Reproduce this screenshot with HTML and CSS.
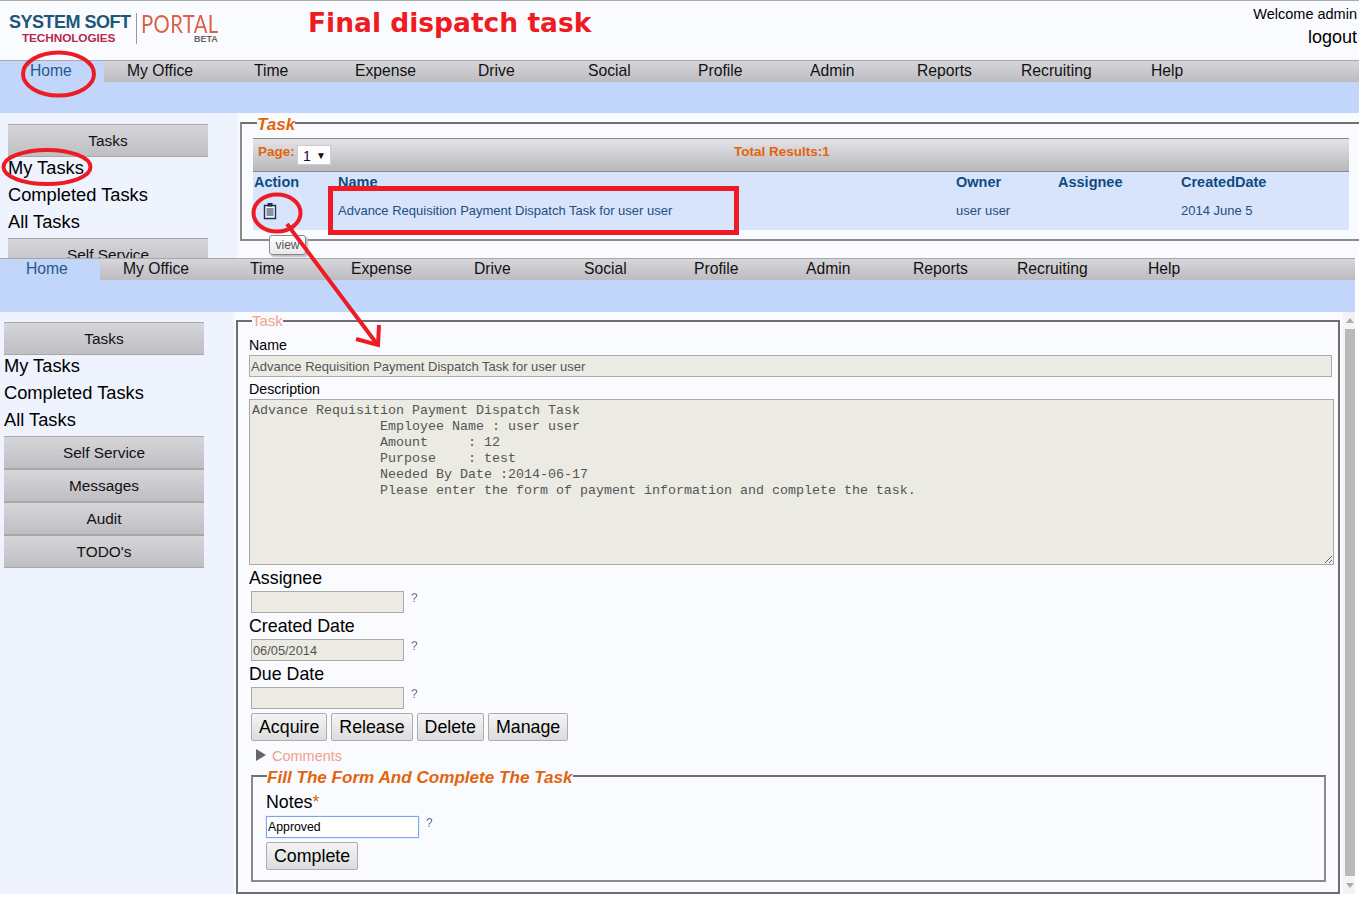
FILE: index.html
```html
<!DOCTYPE html>
<html lang="en">
<head>
<meta charset="utf-8">
<title>Final dispatch task</title>
<link rel="stylesheet" href="styles.css">
</head>
<body>
<div class="page">
  <section class="shot shot-a">
    <header class="topbar">
      <div class="logo">
        <div class="logo-left">
          <span class="logo-sys">SYSTEM SOFT</span>
          <span class="logo-tech">TECHNOLOGIES</span>
        </div>
        <div class="logo-right">
          <span class="logo-portal">PORTAL</span>
          <span class="logo-beta">BETA</span>
        </div>
      </div>
      <h1 class="title">Final dispatch task</h1>
      <div class="user">
        <span class="welcome">Welcome admin</span>
        <span class="logout">logout</span>
      </div>
    </header>
    <nav class="nav">
      <span class="tab tab-home">Home</span><span class="tab">My Office</span><span class="tab">Time</span><span class="tab">Expense</span><span class="tab">Drive</span><span class="tab">Social</span><span class="tab">Profile</span><span class="tab">Admin</span><span class="tab">Reports</span><span class="tab">Recruiting</span><span class="tab">Help</span>
    </nav>
    <div class="band"></div>
    <div class="body">
      <aside class="side">
        <div class="side-head">Tasks</div>
        <div class="side-link">My Tasks</div>
        <div class="side-link">Completed Tasks</div>
        <div class="side-link">All Tasks</div>
        <div class="side-head">Self Service</div>
      </aside>
      <main class="main">
        <fieldset class="box list-box">
          <legend class="legend-strong">Task</legend>
          <div class="pager">
            <span class="pager-label">Page:</span>
            <span class="select">1<i class="select-arrow">▼</i></span>
            <span class="pager-total">Total Results:1</span>
          </div>
          <div class="grid">
            <span class="th">Action</span><span class="th">Name</span><span class="th">Owner</span><span class="th">Assignee</span><span class="th">CreatedDate</span>
            <span class="td">
              <svg class="clip" viewBox="0 0 14 18" width="14" height="18"><path d="M1.5 3.5h11v13h-11z" fill="#f4f7ff" stroke="#1f2f4d" stroke-width="1.4"/><path d="M4.5 1h5v3.5h-5z" fill="#1f2f4d"/><path d="M3.5 7h7M3.5 9h7M3.5 11h7M3.5 13h7" stroke="#1f2f4d" stroke-width="1.1"/></svg>
            </span>
            <span class="td">Advance Requisition Payment Dispatch Task for user user</span><span class="td">user user</span><span class="td"></span><span class="td">2014 June 5</span>
          </div>
        </fieldset>
      </main>
    </div>
    <div class="tip">view</div>
  </section>

  <section class="shot shot-b">
    <nav class="nav">
      <span class="tab tab-home">Home</span><span class="tab">My Office</span><span class="tab">Time</span><span class="tab">Expense</span><span class="tab">Drive</span><span class="tab">Social</span><span class="tab">Profile</span><span class="tab">Admin</span><span class="tab">Reports</span><span class="tab">Recruiting</span><span class="tab">Help</span>
    </nav>
    <div class="band"></div>
    <div class="body">
      <aside class="side">
        <div class="side-head">Tasks</div>
        <div class="side-link">My Tasks</div>
        <div class="side-link">Completed Tasks</div>
        <div class="side-link">All Tasks</div>
        <div class="side-head">Self Service</div>
        <div class="side-head">Messages</div>
        <div class="side-head">Audit</div>
        <div class="side-head">TODO's</div>
      </aside>
      <main class="main">
        <fieldset class="box form-box">
          <legend class="legend-light">Task</legend>
          <label class="lbl-small lbl-name">Name</label>
          <input class="field field-wide" readonly value="Advance Requisition Payment Dispatch Task for user user">
          <label class="lbl-small lbl-desc">Description</label>
          <textarea class="area" readonly>Advance Requisition Payment Dispatch Task
                Employee Name : user user
                Amount     : 12
                Purpose    : test
                Needed By Date :2014-06-17
                Please enter the form of payment information and complete the task.</textarea>
          <label class="lbl">Assignee</label>
          <div class="row"><input class="field" readonly><span class="q">?</span></div>
          <label class="lbl">Created Date</label>
          <div class="row"><input class="field" readonly value="06/05/2014"><span class="q">?</span></div>
          <label class="lbl">Due Date</label>
          <div class="row"><input class="field" readonly><span class="q">?</span></div>
          <div class="actions">
            <button class="btn" type="button">Acquire</button>
            <button class="btn" type="button">Release</button>
            <button class="btn" type="button">Delete</button>
            <button class="btn" type="button">Manage</button>
          </div>
          <div class="comments"><i class="tri"></i><span>Comments</span></div>
          <fieldset class="box inner-box">
            <legend class="legend-strong legend-long">Fill The Form And Complete The Task</legend>
            <label class="lbl lbl-notes">Notes<span class="req">*</span></label>
            <div class="row"><input class="field field-focus" value="Approved"><span class="q">?</span></div>
            <button class="btn btn-complete" type="button">Complete</button>
          </fieldset>
        </fieldset>
        <div class="scroll">
          <i class="arrow-up"></i>
          <div class="thumb"></div>
          <i class="arrow-down"></i>
        </div>
      </main>
    </div>
  </section>

  <svg class="marks" width="1359" height="897" viewBox="0 0 1359 897" fill="none" stroke="#ed1c24">
    <ellipse cx="58.5" cy="74" rx="35.5" ry="21.5" stroke-width="4"/>
    <ellipse cx="47" cy="167" rx="43.5" ry="17" stroke-width="4"/>
    <ellipse cx="277" cy="213" rx="23.5" ry="18.5" stroke-width="4"/>
    <rect x="330.5" y="188.5" width="406" height="44" stroke-width="5"/>
    <path d="M287 224L377 344" stroke-width="4"/>
    <path d="M356 339L378 345L379 325" stroke-width="4"/>
  </svg>
</div>
</body>
</html>
```
FILE: styles.css
```css
* { box-sizing: border-box; }
html, body { margin: 0; padding: 0; background: #fff; }
body { font-family: "Liberation Sans", Arial, sans-serif; color: #000; }
.page { position: relative; width: 1359px; height: 897px; overflow: hidden; }

.shot { position: relative; background: #fafbff; }
.shot-a { width: 1359px; height: 258px; overflow: hidden; }
.shot-b { width: 1355px; height: 636px; }

.topbar { height: 60px; border-top: 1px solid #aaa; display: flex; align-items: flex-start; position: relative; }
.logo { display: flex; margin: 12px 0 0 9px; width: 299px; }
.logo-left { display: flex; flex-direction: column; width: 128px; height: 31px; border-right: 1px solid #999; }
.logo-sys { font-size: 18px; font-weight: bold; color: #1c5875; line-height: 19px; letter-spacing: -.5px; white-space: nowrap; }
.logo-tech { font-size: 11.8px; font-weight: bold; color: #b32a4c; line-height: 12px; margin-left: 13px; letter-spacing: -.1px; }
.logo-right { display: flex; flex-direction: column; margin-left: 4px; }
.logo-portal { font-family: Lato, sans-serif; font-weight: 400; font-size: 25px; line-height: 20px; color: #dd5f48; letter-spacing: .5px; transform: scaleX(.81); transform-origin: left center; }
.logo-beta { font-size: 9px; font-weight: bold; color: #666; line-height: 10px; margin: 1px 0 0 53px; }
.title { margin: 4px 0 0; font: bold 26.5px/36px "DejaVu Sans", sans-serif; color: #ef1b23; white-space: nowrap; }
.user { margin-left: auto; display: flex; flex-direction: column; align-items: flex-end; padding: 4px 2px 0 0; }
.welcome { font-size: 14.5px; line-height: 18px; }
.logout { font-size: 18px; line-height: 28px; }

.nav { display: grid; height: 22px; background: #c2d6fb; border-top: 1px solid #a9a9a9; grid-template-columns: 104px 127px 101px 123px 110px 110px 112px 107px 104px 130px 1fr; }
.shot-b .nav { grid-template-columns: 100px 127px 101px 123px 110px 110px 112px 107px 104px 131px 1fr; }
.tab { height: 21px; padding-left: 23px; font-size: 15.7px; line-height: 19px; color: #111; background: linear-gradient(#d6d6da, #bdbdc1); white-space: nowrap; }
.tab-home { background: none; color: #28578c; padding-left: 30px; }
.shot-b .tab-home { padding-left: 26px; }
.band { height: 31px; background: #c2d6fb; }
.shot-b .band { height: 32px; }

.body { display: flex; }
.side { width: 238px; flex: none; background: #eff3fe; padding: 11px 30px 0 8px; height: 145px; }
.shot-b .body { height: 582px; }
.shot-b .side { width: 234px; height: 582px; padding: 10px 30px 0 4px; }
.side-head { height: 33px; text-align: center; font-size: 15.4px; line-height: 32px; color: #111; border-top: 1px solid #a8a8a8; border-bottom: 1px solid #a8a8a8; background: linear-gradient(#d6d6da, #bfbfc3); white-space: nowrap; }
.side-link { height: 27px; font-size: 18.3px; line-height: 22px; white-space: nowrap; }

.main { flex: 1; display: flex; min-width: 0; }
.box { margin: 0; padding: 0; min-width: 0; border: 2px solid #8a8a8a; border-top-color: #6f6f6f; }
.list-box { margin: -1px 0 0 2px; flex: none; width: 1121px; height: 129px; padding: 0 10px 0 11px; }
.legend-strong { margin-left: 4px; padding: 4px 0 0; font: italic bold 17.1px/18px "Liberation Sans", sans-serif; color: #e2640d; }
.legend-light { margin-left: 3px; padding: 0; font-size: 15px; line-height: 16px; color: #f2a488; }
.legend-long { margin-left: 1px; }

.pager { height: 34px; margin-top: 4px; display: flex; align-items: flex-start; padding: 6px 0 0 5px; border-top: 1px solid #888; border-bottom: 1px solid #888; background: linear-gradient(#e4e4e8, #b8b8bc); }
.pager-label { font-size: 13.5px; font-weight: bold; color: #e2640d; line-height: 14px; width: 39px; }
.select { width: 34px; height: 20px; background: #fff; border: 1px solid #ccc; font-size: 14px; line-height: 20px; padding-left: 5px; color: #204; display: flex; justify-content: space-between; }
.select-arrow { font-style: normal; font-size: 10px; margin-right: 4px; color: #111; }
.pager-total { margin-left: 403px; font-size: 13.5px; font-weight: bold; color: #e2640d; line-height: 14px; }

.grid { display: grid; grid-template-columns: 84px 618px 102px 123px 1fr; grid-template-rows: 20px 38px; background: #d8e4fb; height: 58px; padding-left: 1px; }
.th { font-size: 14.5px; font-weight: bold; color: #0f4c7f; line-height: 20px; white-space: nowrap; }
.td { font-size: 13px; color: #234e80; line-height: 38px; white-space: nowrap; }
.clip { display: block; margin: 10px 0 0 9px; }

.tip { position: absolute; left: 269px; top: 235px; width: 37px; height: 20px; border: 1px solid #888; border-radius: 3px; background: linear-gradient(#fff, #e8e8ee); box-shadow: 2px 2px 2px #bbb; font-size: 12px; line-height: 18px; text-align: center; color: #555; }

.form-box { margin: 1px 0 0 2px; width: 1104px; height: 581px; padding: 0 6px 0 11px; flex: none; background: #fafbff; border-color: #6f6f6f; }
.lbl-small { display: block; font-size: 14.2px; line-height: 18px; }
.lbl-name { margin: 7px 0 1px; }
.lbl-desc { margin-top: 3px; }
.lbl { display: block; font-size: 17.8px; line-height: 26px; }
.field { display: block; width: 153px; height: 22px; padding: 0 1px; border: 1px solid #aaa; background: #ebebe4; font: 12.8px "Liberation Sans", sans-serif; color: #555; border-radius: 0; outline: none; }
.field-wide { width: 1083px; font-size: 13px; }
.area { display: block; width: 1085px; height: 166px; margin: 1px 0 0; padding: 3px 2px 2px; border: 1px solid #aaa; background: #ebebe4; font: 13.33px/16px "Liberation Mono", monospace; color: #555; border-radius: 0; outline: none; overflow: hidden; }
.row { display: flex; padding-left: 2px; }
.q { margin-left: 7px; font-size: 12px; line-height: 14px; color: transparent; background: linear-gradient(#5d6a90 68%, #c2273a 68%); -webkit-background-clip: text; background-clip: text; }
.actions { display: flex; gap: 4px; margin: 4px 0 0 2px; }
.btn { height: 28px; padding: 0 7px; border: 1px solid #adadad; border-radius: 2px; background: linear-gradient(#f4f4f4, #dcdcdc); font: 17.8px "Liberation Sans", sans-serif; color: #000; }
.comments { display: flex; align-items: center; height: 20px; margin: 5px 0 0 7px; font-size: 14.5px; color: #f2a08a; }
.tri { width: 0; height: 0; border-left: 10px solid #666; border-top: 6px solid transparent; border-bottom: 6px solid transparent; margin: -3px 6px 0 0; }
.inner-box { margin: -1px 0 0 2px; width: 1075px; height: 117px; padding: 0 0 0 13px; }
.lbl-notes { margin: 2px 0 1px; }
.req { color: #e2640d; }
.inner-box .row { padding-left: 0; }
.field-focus { background: #fff; border-color: #7aa7e8; color: #000; font-size: 12.3px; box-shadow: 0 0 1px #9cc0f5; }
.btn-complete { display: block; margin-top: 4px; }

.scroll { width: 12px; margin-left: 3px; padding-left: 2px; display: flex; flex-direction: column; align-items: center; background: #f3f3f3; height: 582px; flex: none; }
.thumb { width: 10px; height: 547px; background: #b9b9b9; margin-top: 6px; flex: none; }
.arrow-up, .arrow-down { width: 0; height: 0; border-left: 4px solid transparent; border-right: 4px solid transparent; flex: none; }
.arrow-up { border-bottom: 5px solid #aaa; margin-top: 6px; }
.arrow-down { border-top: 5px solid #aaa; margin-top: 7px; }

.marks { position: absolute; left: 0; top: 0; pointer-events: none; }
```
